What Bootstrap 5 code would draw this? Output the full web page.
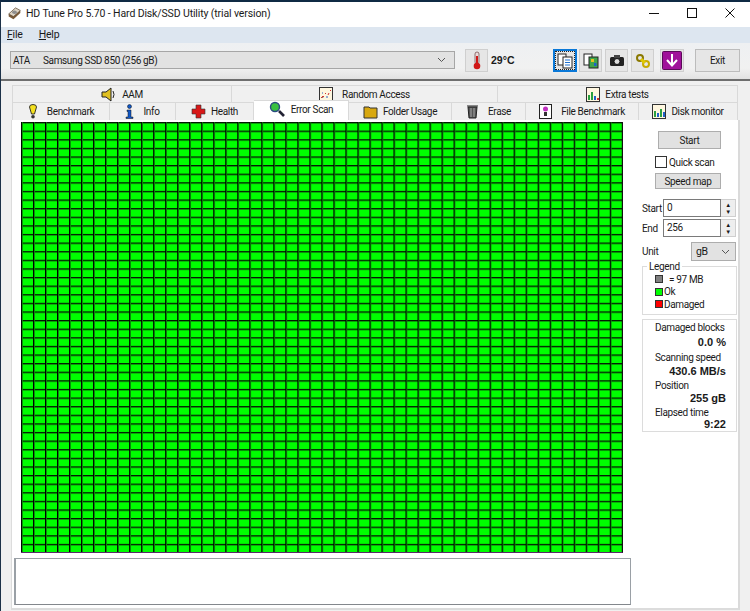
<!DOCTYPE html>
<html lang="en">
<head>
<meta charset="utf-8">
<title>HD Tune Pro</title>
<link rel="stylesheet" href="https://cdn.jsdelivr.net/npm/bootstrap@5.3.0/dist/css/bootstrap.min.css">
<style>
html,body{margin:0;width:750px;height:611px;overflow:hidden;background:#f0f0f0}
body{font-family:Roboto,"Liberation Sans",sans-serif;font-size:10px;line-height:13px;color:#1a1a1a;letter-spacing:-.35px}
.win{width:750px;height:611px;border-top:2px solid #0f2a44;border-left:1px solid #1c3148;display:flex;flex-direction:column}
.ttl{height:25px;background:#fff;font-size:10.5px;padding:0 0 3px 7px;flex:none;letter-spacing:-.13px}
.ttl>svg{margin-right:5px}
.wbtns{margin-left:auto;margin-right:1px}
.wbtn{width:38px;height:20px;display:flex;align-items:center;justify-content:center}
.mnu{height:16px;background:#dde6f0;flex:none;padding:0 0 2px 6px;gap:16px;font-size:10.5px;letter-spacing:-.2px}
.tbar{height:38px;flex:none;background:linear-gradient(#eef0f2,#f1f1f1 70%,#e2e2e2);border-bottom:2px solid #6e6e6e;padding:6px 0 0 9px;align-items:flex-start}
.combo{width:445px;height:18px;margin-top:2px;background:#e2e2e2;border:1px solid #a6a6a6;padding:0 8px 0 2px}
.gap1{width:13px}
.tb{width:23px;height:23px;margin-left:3px;background:#e6e6e6;border:1px solid #cfcfcf;display:flex;align-items:center;justify-content:center;flex:none}
.tbt{margin-left:10px}
.tbs{margin-left:0;width:24px;border:2px solid #0a78d7;outline:1px dotted #222;outline-offset:-3px}
.tbn{margin-left:2px}
.tbp{margin-left:6px;width:24px}
.tempv{font-family:"Liberation Sans",sans-serif;font-weight:700;font-size:10.5px;margin-left:3px;width:62px;padding-top:5px;letter-spacing:0}
.exit{width:45px;margin-left:11px;height:23px;background:#e6e6e6;border:1px solid #bcbcbc;display:flex;align-items:center;justify-content:center;flex:none}
.tabs1,.tabs2{flex:none;margin-left:11px;width:726px}
.tabs1{height:17px;margin-top:4px}
.tabs2{height:18px}
.tabx{background:#f0f0f0;border:1px solid #d9d9d9;border-bottom:0;border-left:0;display:flex;align-items:center;justify-content:center;gap:5px;height:100%;flex:none}
.tabx:first-child{border-left:1px solid #d9d9d9}
.tabon{background:#fff;height:20px;margin-top:-2px;padding-bottom:3px;position:relative}
.w220{width:220px}.w266{width:266px}.w240{width:240px}
.w98{width:98px}.w66{width:66px}.w78{width:78px}.w95{width:95px}.w103{width:103px}.w74{width:74px}.w113{width:113px}.w99{width:99px}
.sheet{flex:1;background:#fff;margin-left:10px;width:729px;border-right:2px solid #dadada;border-bottom:2px solid #dcdcdc;border-left:1px solid #dcdcdc;margin-bottom:1px;padding:2px 0 0 9px;gap:4px}
.leftc{width:617px;flex:none}
.scan{width:602px;height:431px;background-color:#0f0;background-image:linear-gradient(90deg,#000 1px,#0a8a0a 1px,#0a8a0a 1.8px,transparent 1.8px),linear-gradient(#021802 1px,#0a9a0a 1px,#0a9a0a 1.5px,transparent 1.5px);background-size:12.02px 8.62px;border-right:1px solid #111;border-bottom:1px solid #5a2a6a}
.logb{height:47px;width:617px;margin:5px 0 0 -7px;background:#fff;border:1px solid #9aa0a6;border-bottom-color:#83878c;border-left-width:2px}
.side{width:96px;padding-top:9px;flex:none}
.wb{background:#e1e1e1;border:1px solid #adadad;display:flex;align-items:center;justify-content:center}
.wb1{width:63px;height:18px;margin-left:16px}
.wb2{width:66px;height:16px;margin:5px 0 0 13px}
.qs{margin:7px 0 0 13px;height:12px;gap:2px}
.cbox{width:12px;height:12px;border:1px solid #333;background:#fff}
.fld{height:18px}
.fld1{margin-top:10px}
.fld2{margin-top:2px}
.fldl{width:21px;flex:none}
.ipt{width:58px;height:18px;border:1px solid #7a7a7a;background:#fff;padding:1px 3px}
.spin{width:15px;height:18px;background:#eee;border:1px solid #cfcfcf;border-left:0;font-size:6px;line-height:7px;flex-direction:column;display:flex;align-items:center;justify-content:center}
.unit{margin-top:5px;height:19px}
.usel{width:45px;height:19px;margin-left:28px;background:#e2e2e2;border:1px solid #adadad;padding:0 5px 0 4px;font-size:10.5px}
.lgd{position:relative;border:1px solid #dcdcdc;height:49px;margin-top:5px;padding:6px 0 0 12px;width:95px}
.lgdt{position:absolute;top:-7px;left:4px;background:#fff;padding:0 2px}
.lgi{height:12.5px;gap:1px}
.sw{width:8px;height:8px;border:1px solid #333}
.sw0{background:#808080;margin-right:1px}.okc{background:#0f0}.dmg{background:#f00}
.stat{border:1px solid #dcdcdc;height:113px;margin-top:4px;width:95px;padding:1px 10px 0 12px}
.statv{font-family:"Liberation Sans",sans-serif;font-weight:700;text-align:right;font-size:11px;line-height:14px;letter-spacing:0}
.gp{margin-top:2px}
.gq{margin-top:1px}
.up{margin-top:-2px}
.tl{line-height:13.5px;white-space:nowrap}
</style>
</head>
<body>
<div class="win">
  <div class="ttl d-flex align-items-center">
    <svg width="13" height="13" viewBox="0 0 19 15" preserveAspectRatio="none"><path d="M1 8 11 1l7 3v3L8 14l-7-3z" fill="#7a5a38"/><path d="M1 8 11 1l7 3L8 11z" fill="#ded4c4" stroke="#4a3a28" stroke-width=".7"/><ellipse cx="9.500" cy="6" rx="3.500" ry="2" fill="#8d8d8d"/></svg>
    <span>HD Tune Pro 5.70 - Hard Disk/SSD Utility (trial version)</span>
    <div class="wbtns d-flex">
      <div class="wbtn"><svg width="10" height="10"><path d="M0 5.500h10" stroke="#111"/></svg></div>
      <div class="wbtn"><svg width="10" height="10"><rect x=".5" y=".5" width="9" height="9" fill="none" stroke="#111"/></svg></div>
      <div class="wbtn"><svg width="10" height="10"><path d="M.5.5l9 9M9.500.5l-9 9" stroke="#111"/></svg></div>
    </div>
  </div>
  <div class="mnu d-flex align-items-center"><span><u>F</u>ile</span><span><u>H</u>elp</span></div>
  <div class="tbar d-flex">
    <div class="combo d-flex align-items-center"><span>ATA</span><span class="gap1"></span><span>Samsung SSD 850 (256 gB)</span>
      <svg class="ms-auto" width="9" height="6"><path d="M1 1l3.500 3.500L8 1" fill="none" stroke="#555"/></svg></div>
    <div class="tb tbt"><svg width="12" height="19" viewBox="0 0 12 19"><rect x="4" y="1" width="4" height="12" rx="2" fill="#eadcdc" stroke="#6a4040" stroke-width=".7"/><rect x="5" y="5" width="2" height="9" fill="#d01818"/><circle cx="6" cy="15" r="3.300" fill="#d01818"/></svg></div>
    <div class="tempv">29°C</div>
    <div class="tb tbs"><svg width="16" height="16" viewBox="0 0 16 16"><rect x="1" y="1" width="8" height="11" fill="#fff" stroke="#222"/><rect x="6" y="4" width="9" height="11" fill="#fff" stroke="#222"/><path d="M8 7h5M8 9.500h5M8 12h5" stroke="#1e70d0" stroke-width="1.200"/></svg></div>
    <div class="tb tbn"><svg width="16" height="16" viewBox="0 0 16 16"><rect x="1" y="1" width="8" height="11" fill="#fff" stroke="#222"/><rect x="6" y="4" width="9" height="11" fill="#3fa64a" stroke="#222"/><rect x="8" y="6" width="3" height="3" fill="#e8c020"/><rect x="11" y="10" width="2.500" height="3" fill="#2060c8"/></svg></div>
    <div class="tb"><svg width="16" height="13" viewBox="0 0 16 13"><rect x="1" y="3" width="14" height="9" rx="1.500" fill="#222"/><rect x="5" y="1" width="6" height="3" fill="#444"/><circle cx="8" cy="7.500" r="3" fill="#ddd" stroke="#111"/></svg></div>
    <div class="tb"><svg width="16" height="16" viewBox="0 0 16 16"><circle cx="5" cy="5" r="3" fill="none" stroke="#8a7800" stroke-width="2"/><circle cx="11" cy="11" r="3" fill="none" stroke="#c8aa00" stroke-width="2"/><path d="M6 6l4 4" stroke="#e0c800" stroke-width="3"/></svg></div>
    <div class="tb tbp"><svg width="20" height="19" viewBox="0 0 20 19"><rect x=".5" y=".5" width="19" height="18" rx="1" fill="#a0109a" stroke="#5a0a58"/><path d="M10 3v11M5 9l5 5.500L15 9" fill="none" stroke="#fff" stroke-width="2"/></svg></div>
    <div class="exit">Exit</div>
  </div>
  <div class="tabs1 d-flex">
    <div class="tabx w220"><svg width="16" height="15" viewBox="0 0 16 15"><path d="M1 5h4l5-4v13l-5-4H1z" fill="#e0c020" stroke="#222"/><path d="M12 4q2 3.500 0 7" fill="none" stroke="#222"/></svg><span>AAM</span></div>
    <div class="tabx w266"><svg width="14" height="14" viewBox="0 0 14 14"><rect x=".5" y=".5" width="13" height="13" fill="#fff7e0" stroke="#333"/><path d="M2 11l2-2 1 1M6 7l1-1M9 8l1-2M11 4l1-1" stroke="#d23030"/><path d="M3 6h1M7 10h2" stroke="#3060c0"/></svg><span class="ms-1">Random Access</span></div>
    <div class="tabx w240"><svg width="14" height="15" viewBox="0 0 14 15"><rect x=".5" y=".5" width="13" height="14" fill="#fff7e0" stroke="#333"/><path d="M2 13V8h2v5zM5 13V5h2v8z" fill="#2aa040"/><path d="M8 13V9h2v4z" fill="#2060c8"/><path d="M11 13v-2h2v2z" fill="#d03030"/></svg><span>Extra tests</span></div>
  </div>
  <div class="tabs2 d-flex">
    <div class="tabx w98"><svg class="me-1" width="10" height="15" viewBox="0 0 10 15"><path d="M1.500 3a3.500 2.500 0 0 1 7 0L6.500 10h-3z" fill="#f4e020" stroke="#222" stroke-width=".9"/><circle cx="5" cy="12.800" r="1.800" fill="#333"/></svg><span>Benchmark</span></div>
    <div class="tabx w66"><svg class="me-1" width="9" height="15" viewBox="0 0 9 15"><circle cx="4.500" cy="2.500" r="2" fill="#1058c8" stroke="#111" stroke-width=".5"/><path d="M2 6h4v7h2v1.500H1V13h2V7.500H2z" fill="#1058c8" stroke="#111" stroke-width=".5"/></svg><span>Info</span></div>
    <div class="tabx w78"><svg width="15" height="15" viewBox="0 0 15 15"><path d="M5 1h5v4h4v5h-4v4H5v-4H1V5h4z" fill="#d81818" stroke="#333" stroke-width=".6"/></svg><span>Health</span></div>
    <div class="tabx tabon w95"><svg width="17" height="16" viewBox="0 0 17 16"><path d="M10 10l5 5" stroke="#223" stroke-width="2.600"/><circle cx="6" cy="6" r="4.500" fill="#38c040" stroke="#2a4a80" stroke-width="1.400"/></svg><span>Error Scan</span></div>
    <div class="tabx w103"><svg width="15" height="14" viewBox="0 0 15 14"><path d="M1 2h5l1 1h7v10H1z" fill="#d8a810" stroke="#333"/></svg><span>Folder Usage</span></div>
    <div class="tabx w74"><svg width="13" height="15" viewBox="0 0 13 15"><path d="M1 2h11M2 3l1 11h7l1-11z" fill="#555" stroke="#222"/><path d="M5 4v9M8 4v9" stroke="#aaa"/></svg><span class="ms-1">Erase</span></div>
    <div class="tabx w113"><svg width="13" height="15" viewBox="0 0 13 15"><rect x=".5" y=".5" width="12" height="14" fill="#fff" stroke="#222"/><circle cx="6.500" cy="5" r="2.500" fill="#c030c0"/><rect x="5" y="8" width="3" height="4" fill="#333"/></svg><span class="ms-1">File Benchmark</span></div>
    <div class="tabx w99"><svg width="14" height="15" viewBox="0 0 14 15"><rect x=".5" y=".5" width="13" height="14" fill="#fff7e0" stroke="#333"/><path d="M2 13V7h2v6zM8 13V5h2v8z" fill="#2aa040"/><path d="M5 13V9h2v4zM11 13V8h2v5z" fill="#2060c8"/></svg><span>Disk monitor</span></div>
  </div>
  <div class="sheet d-flex">
    <div class="leftc">
      <div class="scan"></div>
      <div class="logb"></div>
    </div>
    <div class="side">
      <div class="wb wb1">Start</div>
      <div class="qs d-flex align-items-center"><span class="cbox"></span><span>Quick scan</span></div>
      <div class="wb wb2">Speed map</div>
      <div class="fld fld1 d-flex align-items-center"><span class="fldl">Start</span><div class="ipt">0</div><div class="spin"><span>▲</span><span>▼</span></div></div>
      <div class="fld fld2 d-flex align-items-center"><span class="fldl">End</span><div class="ipt">256</div><div class="spin"><span>▲</span><span>▼</span></div></div>
      <div class="unit d-flex align-items-center"><span class="fldl">Unit</span><div class="usel d-flex align-items-center"><span>gB</span><svg class="ms-auto" width="9" height="6"><path d="M1 1l3.500 3.500L8 1" fill="none" stroke="#555"/></svg></div></div>
      <div class="lgd">
        <span class="lgdt">Legend</span>
        <div class="lgi d-flex align-items-center"><span class="sw sw0"></span><span class="ms-1">= 97 MB</span></div>
        <div class="lgi d-flex align-items-center"><span class="sw okc"></span><span>Ok</span></div>
        <div class="lgi d-flex align-items-center"><span class="sw dmg"></span><span>Damaged</span></div>
      </div>
      <div class="stat">
        <div class="tl">Damaged blocks</div><div class="statv">0.0 %</div>
        <div class="tl gp">Scanning speed</div><div class="statv">430.6 MB/s</div>
        <div class="tl gq">Position</div><div class="statv up">255 gB</div>
        <div class="tl gq">Elapsed time</div><div class="statv up">9:22</div>
      </div>
    </div>
  </div>
</div>
</body>
</html>
